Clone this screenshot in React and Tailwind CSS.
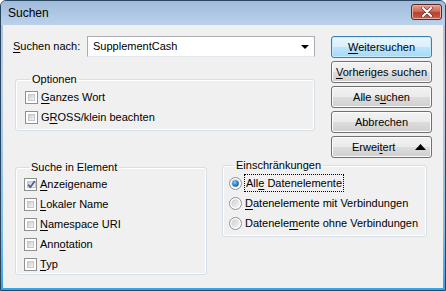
import React from 'react';

const U = ({ children }) => <span className="underline underline-offset-[2px] decoration-[1px]">{children}</span>;

const Check = ({ checked }) => (
  <span className="flex w-[13px] h-[13px] shrink-0 border border-[#8e8f8f] bg-white p-[2px]">
    <span className="flex flex-1 items-center justify-center bg-[linear-gradient(135deg,#c9cdd3,#f4f5f6)] border border-[#c4c8cc]">
      {checked && (
        <svg width="9" height="9" viewBox="0 0 9 9" className="-m-[1px]">
          <path d="M1.2 4.6 L3.4 7.2 L7.8 1" fill="none" stroke="#4a5f92" strokeWidth="1.7" />
        </svg>
      )}
    </span>
  </span>
);

const Radio = ({ checked }) => (
  <svg width="13" height="13" viewBox="0 0 13 13" className="shrink-0">
    <defs>
      <linearGradient id="rg" x1="0" y1="0" x2="1" y2="1">
        <stop offset="0" stopColor="#c8ccd2" />
        <stop offset="1" stopColor="#f6f7f8" />
      </linearGradient>
      <radialGradient id="rd" cx="0.4" cy="0.35" r="0.7">
        <stop offset="0" stopColor="#8fd0f7" />
        <stop offset="0.5" stopColor="#2f8fd6" />
        <stop offset="1" stopColor="#1a4f8f" />
      </radialGradient>
    </defs>
    <circle cx="6.5" cy="6.5" r="6" fill="#ffffff" stroke="#8e8f8f" />
    <circle cx="6.5" cy="6.5" r="4.2" fill="url(#rg)" />
    {checked && <circle cx="6.5" cy="6.5" r="3.3" fill="url(#rd)" />}
  </svg>
);

const Btn = ({ children, def }) => (
  <div
    className={
      'h-[22px] w-[101px] rounded-[3px] border flex items-center justify-center text-black ' +
      (def
        ? 'border-[#3c7fb1] bg-[linear-gradient(#eaf6fd,#d9f0fc_50%,#bee6fd_50%,#a7d9f5)] shadow-[inset_0_0_0_1px_#c8eafd]'
        : 'border-[#707070] bg-[linear-gradient(#f2f2f2,#ebebeb_50%,#dddddd_50%,#cfcfcf)] shadow-[inset_0_0_0_1px_#fcfcfc]')
    }
  >
    {children}
  </div>
);

const Group = ({ title, className, children }) => (
  <fieldset className={'border border-[#d5dfe5] rounded-[3px] shadow-[inset_0_0_0_1px_#ffffff] ' + className}>
    <legend className="ml-[5px] px-[2px] leading-[14px]">{title}</legend>
    {children}
  </fieldset>
);

const Row = ({ children }) => <div className="h-[20px] flex items-center gap-[3px] whitespace-nowrap">{children}</div>;

export default function App() {
  return (
    <div className="w-[446px] h-[291px] flex flex-col border border-[#2a4560] rounded-t-[6px] overflow-hidden bg-[linear-gradient(#a5c0dd,#b8cfe8_30%,#7cbde8_80%,#2fa6e6)] font-['Liberation_Sans',Arial,sans-serif] text-[11px] text-black">
      {/* Titelleiste */}
      <div className="h-[24px] shrink-0 flex items-center justify-between pl-[7px] pr-[3px] bg-linear-to-b from-[#a0bcdb] to-[#bad1ea]">
        <span className="text-[12px]">Suchen</span>
        <div className="w-[31px] h-[16px] mt-[-3px] rounded-[3px] border border-[#5a2620] bg-[linear-gradient(#e3a090,#cf6a58_45%,#b9402c_55%,#c8604a)] shadow-[inset_0_0_0_1px_#eab0a4] flex items-center justify-center">
          <svg width="12" height="10" viewBox="0 0 12 10">
            <path d="M2 1 L10 9 M10 1 L2 9" stroke="#5a3a36" strokeWidth="3.2" strokeLinecap="round" />
            <path d="M2 1 L10 9 M10 1 L2 9" stroke="#ffffff" strokeWidth="2" strokeLinecap="round" />
          </svg>
        </div>
      </div>

      {/* Inhalt */}
      <div className="flex-1 mx-[2px] mb-[2px] bg-[#f0f0f0] pl-[10px] pt-[11px]">
        <div className="flex">
          <div className="w-[302px]">
            <div className="flex items-center">
              <span className="w-[74px]">
                <U>S</U>uchen nach:
              </span>
              <div className="w-[228px] h-[21px] bg-white border border-[#abadb3] border-b-[#e3e9ef] flex items-center justify-between pl-[5px] pr-[5px]">
                <span>SupplementCash</span>
                <svg width="8" height="4" viewBox="0 0 8 4">
                  <path d="M0 0 H8 L4 4 Z" fill="#000" />
                </svg>
              </div>
            </div>
            <Group title="Optionen" className="ml-[2px] mt-[15px] w-[300px] pl-[9px] pt-[1px] pb-[3px]">
              <Row>
                <Check />
                <span><U>G</U>anzes Wort</span>
              </Row>
              <Row>
                <Check />
                <span>G<U>R</U>OSS/klein beachten</span>
              </Row>
            </Group>
          </div>
          <div className="ml-[16px] flex flex-col gap-[3px]">
            <Btn def><span><U>W</U>eitersuchen</span></Btn>
            <Btn><span><U>V</U>orheriges suchen</span></Btn>
            <Btn><span>Alle s<U>u</U>chen</span></Btn>
            <Btn>Abbrechen</Btn>
            <div className="h-[22px] w-[101px] rounded-[3px] border border-[#707070] bg-[linear-gradient(#f2f2f2,#ebebeb_50%,#dddddd_50%,#cfcfcf)] shadow-[inset_0_0_0_1px_#fcfcfc] flex items-center justify-between pl-[20px] pr-[5px]">
              <span>Erwei<U>t</U>ert</span>
              <svg width="11" height="6" viewBox="0 0 11 6">
                <path d="M0 6 L5.5 0 L11 6 Z" fill="#000" />
              </svg>
            </div>
          </div>
        </div>

        <div className="flex items-start">
          <Group title="Suche in Element" className="ml-[2px] mt-[2px] w-[192px] pl-[8px] pb-0">
            <Row>
              <Check checked />
              <span><U>A</U>nzeigename</span>
            </Row>
            <Row>
              <Check />
              <span><U>L</U>okaler Name</span>
            </Row>
            <Row>
              <Check />
              <span><U>N</U>amespace URI</span>
            </Row>
            <Row>
              <Check />
              <span>Ann<U>o</U>tation</span>
            </Row>
            <Row>
              <Check />
              <span><U>T</U>yp</span>
            </Row>
          </Group>
          <Group title="Einschränkungen" className="ml-[15px] w-[205px] pl-[6px] pt-[1px] pb-[3px]">
            <Row>
              <Radio checked />
              <span className="outline-1 outline-dotted outline-black px-[1px]">All<U>e</U> Datenelemente</span>
            </Row>
            <Row>
              <Radio />
              <span><U>D</U>atenelemente mit Verbindungen</span>
            </Row>
            <Row>
              <Radio />
              <span>Datenele<U>m</U>ente ohne Verbindungen</span>
            </Row>
          </Group>
        </div>
      </div>
    </div>
  );
}
